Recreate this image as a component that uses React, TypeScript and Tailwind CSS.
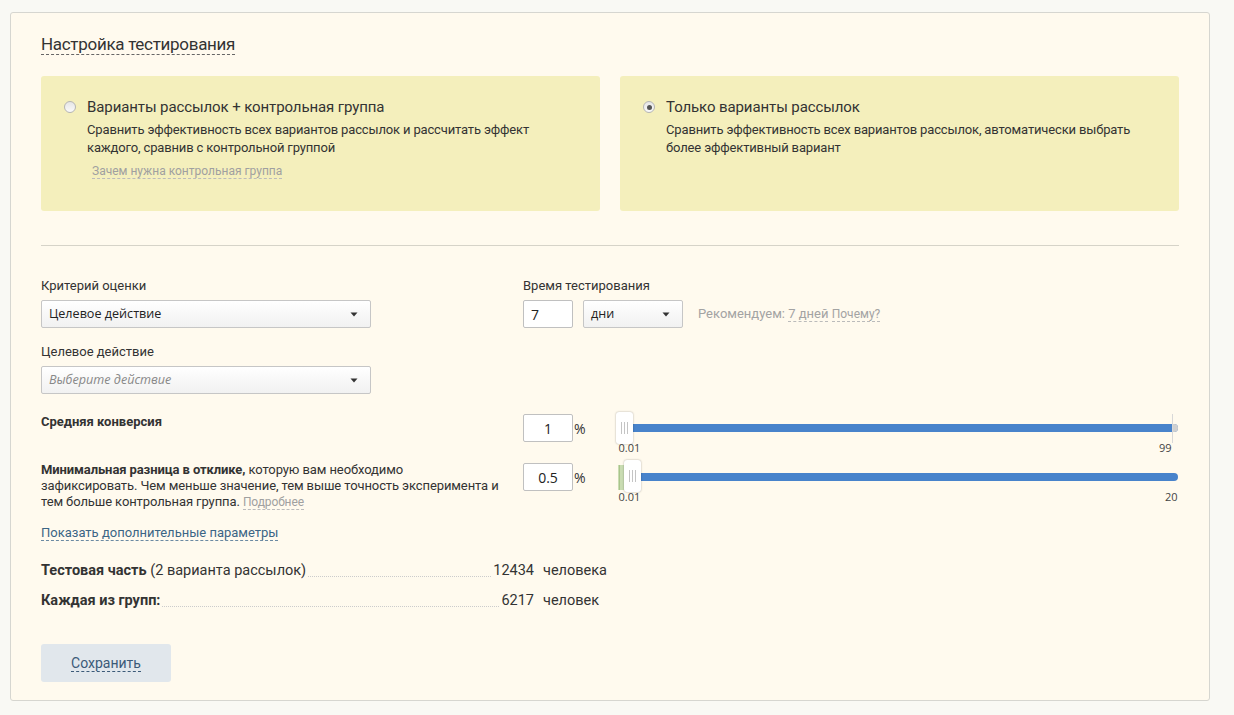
import React from "react";

const body = { fontFamily: "Roboto, 'Noto Sans', sans-serif" };
const ui = { fontFamily: "'Open Sans', 'Noto Sans', sans-serif" };

function Radio({ checked }: { checked?: boolean }) {
  return (
    <span className="flex h-[12px] w-[12px] shrink-0 items-center justify-center rounded-full border border-[#b5b5b5] bg-gradient-to-b from-[#e6e6e6] to-[#fafafa]">
      {checked && <span className="h-[5px] w-[5px] rounded-full bg-[#555]" />}
    </span>
  );
}

function Caret() {
  return (
    <svg width="8" height="5" viewBox="0 0 8 5" className="shrink-0">
      <path d="M0.5 0.5 L7.5 0.5 L4 4.5 Z" fill="#333" />
    </svg>
  );
}

function Select({ value, placeholder, className }: { value: string; placeholder?: boolean; className: string }) {
  return (
    <div
      className={`flex h-[28px] items-center justify-between rounded-[2px] border border-[#c6c6c6] bg-gradient-to-b from-white to-[#f1f1f1] pl-[7px] pr-[12px] text-[12.6px] ${className}`}
      style={ui}
    >
      <span className={placeholder ? "italic text-[#888]" : "text-[#222]"}>{value}</span>
      <Caret />
    </div>
  );
}

function Handle() {
  return (
    <div className="flex h-[32px] w-[17px] items-center justify-center gap-[2px] rounded-[3px] bg-white shadow-[0_0_2px_rgba(0,0,0,0.35)]">
      <span className="h-[12px] w-px bg-[#c4c4c4]" />
      <span className="h-[12px] w-px bg-[#c4c4c4]" />
      <span className="h-[12px] w-px bg-[#c4c4c4]" />
    </div>
  );
}

function Slider({ min, max, second }: { min: string; max: string; second?: boolean }) {
  return (
    <div className="ml-[33px] flex w-[559px] flex-col">
      <div className="relative h-[28px]">
        <div className="absolute left-0 right-0 top-[10px] h-[8px] rounded-r-full bg-[#4883cb]" />
        {!second && (
          <>
            <div className="absolute right-0 top-[10px] h-[8px] w-[6px] rounded-r-full bg-[#d0d0d0]" />
            <div className="absolute right-[5px] top-0 h-[29px] w-px bg-[#d8d8d8]" />
            <div className="absolute left-[-3px] top-[-2px]">
              <Handle />
            </div>
          </>
        )}
        {second && (
          <>
            <div className="absolute left-[-1px] top-[2px] h-[25px] w-[7px] bg-[#c9dcb2]" />
            <div className="absolute left-[0px] top-[2px] h-[25px] w-px bg-[#a9c48a]" />
            <div className="absolute left-[5px] top-[-3px]">
              <Handle />
            </div>
          </>
        )}
      </div>
      <div className="flex justify-between text-[11px] leading-[12px] text-[#444]" style={ui}>
        <span>{min}</span>
        <span className={second ? "" : "mr-[6px]"}>{max}</span>
      </div>
    </div>
  );
}

function PercentInput({ value }: { value: string }) {
  return (
    <div className="flex items-center">
      <div
        className="flex h-[28px] w-[50px] items-center justify-center rounded-[2px] border border-[#c0c0c0] bg-white text-[14px] text-[#222]"
        style={ui}
      >
        {value}
      </div>
      <span className="ml-[1px] text-[14px] text-[#333]" style={ui}>%</span>
    </div>
  );
}

export default function App() {
  return (
    <div className="min-h-[715px] bg-[#f9f9f4] pb-[14px] pl-[10px] pr-[24px] pt-[12px]" style={body}>
      <div className="rounded-[3px] border border-[#d6d6d0] bg-[#fffaee] px-[30px] pb-[18px] pt-[21px] text-[#333]">
        <div className="leading-[20px]">
          <span className="border-b border-dashed border-[#666] text-[17px] leading-[20px] tracking-[-0.3px] text-[#333]">
            Настройка тестирования
          </span>
        </div>

        <div className="mt-[21px] grid grid-cols-2 gap-[20px]">
          <div className="h-[135px] rounded-[3px] bg-[#f4efbc] pl-[23px] pt-[21px]">
            <div className="flex items-center gap-[11px]">
              <Radio />
              <span className="text-[15px] leading-[20px] tracking-[-0.1px]">Варианты рассылок + контрольная группа</span>
            </div>
            <div className="ml-[23px] mt-[4px] text-[13px] leading-[18px] tracking-[-0.15px] text-[#333]">
              Сравнить эффективность всех вариантов рассылок и рассчитать эффект
              <br />
              каждого, сравнив с контрольной группой
            </div>
            <div className="ml-[28px] mt-[6px] text-[12px] leading-[16px]">
              <span className="border-b border-dashed border-[#bbb] text-[#a0a0a0]">Зачем нужна контрольная группа</span>
            </div>
          </div>
          <div className="h-[135px] rounded-[3px] bg-[#f4efbc] pl-[23px] pt-[21px]">
            <div className="flex items-center gap-[11px]">
              <Radio checked />
              <span className="text-[15px] leading-[20px] tracking-[-0.1px]">Только варианты рассылок</span>
            </div>
            <div className="ml-[23px] mt-[4px] text-[13px] leading-[18px] tracking-[-0.15px] text-[#333]">
              Сравнить эффективность всех вариантов рассылок, автоматически выбрать
              <br />
              более эффективный вариант
            </div>
          </div>
        </div>

        <div className="mt-[34px] h-px bg-[#d6d3c8]" />

        <div className="mt-[31px] flex">
          <div className="w-[482px]">
            <div className="text-[13px] leading-[18px]">Критерий оценки</div>
            <Select className="mt-[5px] w-[330px]" value="Целевое действие" />
            <div className="mt-[15px] text-[13px] leading-[18px]">Целевое действие</div>
            <Select className="mt-[5px] w-[330px]" value="Выберите действие" placeholder />
          </div>
          <div>
            <div className="text-[13px] leading-[18px]">Время тестирования</div>
            <div className="mt-[5px] flex items-center">
              <div className="flex h-[28px] w-[50px] items-center rounded-[2px] border border-[#c0c0c0] bg-white pl-[7px] text-[14px] text-[#222]" style={ui}>
                7
              </div>
              <Select className="ml-[10px] w-[100px]" value="дни" />
              <div className="ml-[15px] text-[13px] text-[#a3a3a3]">
                Рекомендуем: <span className="border-b border-dashed border-[#bbb]">7 дней</span>{" "}
                <span className="border-b border-dashed border-[#bbb] text-[12px]">Почему?</span>
              </div>
            </div>
          </div>
        </div>

        <div className="mt-[20px] flex items-start">
          <div className="w-[482px] text-[13px] font-bold leading-[16px]">Средняя конверсия</div>
          <PercentInput value="1" />
          <Slider min="0.01" max="99" />
        </div>

        <div className="mt-[8px] flex items-start">
          <div className="w-[482px] text-[13px] leading-[16px] tracking-[-0.1px]">
            <b>Минимальная разница в отклике,</b> которую вам необходимо
            <br />
            зафиксировать. Чем меньше значение, тем выше точность эксперимента и
            <br />
            тем больше контрольная группа.{" "}
            <span className="border-b border-dashed border-[#bbb] text-[12px] leading-[14px] text-[#a0a0a0]">Подробнее</span>
          </div>
          <div className="mt-[1px] flex items-start">
            <PercentInput value="0.5" />
            <Slider min="0.01" max="20" second />
          </div>
        </div>

        <div className="mt-[14px] text-[13px] leading-[18px]">
          <span className="border-b border-dashed border-[#6b8aa3] text-[#3b6585]">Показать дополнительные параметры</span>
        </div>

        <div className="mt-[19px] flex flex-col gap-[10px] text-[14.5px] leading-[20px]">
          <div className="flex items-end">
            <div className="flex w-[493px] items-end">
              <span><b>Тестовая часть</b> (2 варианта рассылок)</span>
              <span className="mx-[2px] mb-[4px] flex-1 border-b border-dotted border-[#ccc]" />
              <span>12434</span>
            </div>
            <span className="ml-[9px]">человека</span>
          </div>
          <div className="flex items-end">
            <div className="flex w-[493px] items-end">
              <b>Каждая из групп:</b>
              <span className="mx-[2px] mb-[4px] flex-1 border-b border-dotted border-[#ccc]" />
              <span>6217</span>
            </div>
            <span className="ml-[9px]">человек</span>
          </div>
        </div>

        <div className="mt-[33px] flex h-[38px] w-[130px] items-center justify-center rounded-[3px] bg-[#e1e7ec] text-[14px]">
          <span className="border-b border-dashed border-[#3b5a78] leading-[16px] text-[#3b5a78]">Сохранить</span>
        </div>
      </div>
    </div>
  );
}
